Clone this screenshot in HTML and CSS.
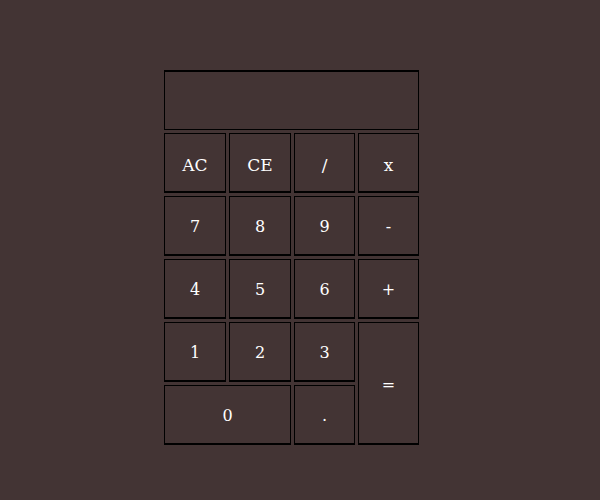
FILE: index.html
```html
<!DOCTYPE html>
<html>
<head>
<meta charset="utf-8">
<link rel="stylesheet" href="styles.css">
</head>
<body>
<div class="calc">
  <div class="display"></div>
  <div class="keys">
    <button class="key word">AC</button>
    <button class="key word">CE</button>
    <button class="key word">/</button>
    <button class="key word">x</button>
    <button class="key">7</button>
    <button class="key">8</button>
    <button class="key">9</button>
    <button class="key">-</button>
    <button class="key">4</button>
    <button class="key">5</button>
    <button class="key">6</button>
    <button class="key">+</button>
    <button class="key">1</button>
    <button class="key">2</button>
    <button class="key">3</button>
    <button class="key equals">=</button>
    <button class="key zero">0</button>
    <button class="key">.</button>
  </div>
</div>
</body>
</html>
```
FILE: styles.css
```css
html, body {
  margin: 0;
  background: #433434;
}
body {
  font-family: "DejaVu Serif", serif;
}
.calc {
  width: 255px;
  margin: 70px 0 0 164px;
  display: flex;
  flex-direction: column;
  gap: 3px;
}
.display {
  height: 60px;
  box-sizing: border-box;
  border: 1px solid #000;
  border-top-width: 2px;
}
.keys {
  display: grid;
  grid-template-columns: 62px 62px 61px 61px;
  grid-auto-rows: 60px;
  gap: 3px;
}
.key {
  box-sizing: border-box;
  background: transparent;
  border: 1px solid #000;
  border-bottom-width: 2px;
  color: #fff;
  font-family: "DejaVu Serif", serif;
  font-size: 16px;
  padding: 2px 0 0;
}
.word {
  font-size: 17px;
  padding-top: 5px;
}
.equals {
  grid-row: span 2;
}
.zero {
  grid-column: span 2;
}
```
